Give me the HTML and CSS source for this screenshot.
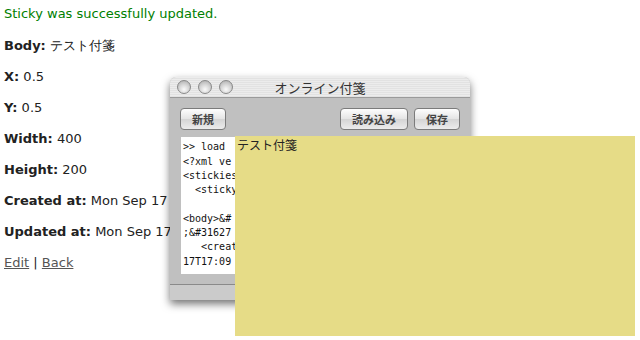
FILE: index.html
```html
<!DOCTYPE html>
<html lang="ja">
<head>
  <meta charset="UTF-8">
  <title>Sticky</title>
  <link rel="stylesheet" href="styles.css">
</head>
<body>
  <p class="notice">Sticky was successfully updated.</p>

  <p><b>Body:</b> テスト付箋</p>
  <p><b>X:</b> 0.5</p>
  <p><b>Y:</b> 0.5</p>
  <p><b>Width:</b> 400</p>
  <p><b>Height:</b> 200</p>
  <p><b>Created at:</b> Mon Sep 17</p>
  <p><b>Updated at:</b> Mon Sep 17</p>

  <p><a href="#">Edit</a> | <a href="#">Back</a></p>

  <div class="window">
    <div class="titlebar">
      <div class="lights"><span></span><span></span><span></span></div>
      <div class="title">オンライン付箋</div>
    </div>
    <div class="panel">
      <div class="toolbar">
        <button>新規</button>
        <div class="right">
          <button>読み込み</button>
          <button>保存</button>
        </div>
      </div>
      <pre class="log">&gt;&gt; load
&lt;?xml ve
&lt;stickies:
  &lt;sticky&gt;

&lt;body&gt;&amp;#
;&amp;#31627
   &lt;creat
17T17:09</pre>
    </div>
    <div class="statusbar"></div>
  </div>

  <div class="sticky">テスト付箋</div>
</body>
</html>
```

FILE: styles.css
```css
body {
  margin: 0;
  padding: 5px 4px;
  font-family: "DejaVu Sans", Verdana, sans-serif;
  font-size: 13px;
  color: #222;
  background: #fff;
  overflow: hidden;
}

p {
  margin: 0 0 13px 0;
  line-height: 18px;
}

.notice {
  color: #008000;
  margin-bottom: 14px;
}

b {
  font-weight: bold;
}

a {
  color: #555;
}

.window {
  position: absolute;
  left: 170px;
  top: 77px;
  width: 300px;
  height: 223px;
  border-radius: 6px 6px 0 0;
  background: #c0c0c0;
  box-shadow: 0 4px 9px rgba(0, 0, 0, 0.55);
  display: flex;
  flex-direction: column;
  overflow: hidden;
}

.titlebar {
  height: 22px;
  background: repeating-linear-gradient(#ececec 0, #ececec 1px, #e2e2e2 1px, #e2e2e2 2px);
  border-bottom: 1px solid #9a9a9a;
  display: flex;
  align-items: center;
  position: relative;
}

.lights {
  display: flex;
  gap: 7px;
  padding-left: 7px;
}

.lights span {
  width: 14px;
  height: 14px;
  border-radius: 50%;
  border: 1px solid #888;
  background: radial-gradient(circle at 50% 70%, #fafafa 0, #d8d8d8 45%, #a8a8a8 100%);
  box-sizing: border-box;
}

.title {
  position: absolute;
  left: 0;
  right: 0;
  text-align: center;
  font-family: "Noto Sans CJK JP", sans-serif;
  font-size: 13px;
  color: #333;
}

.panel {
  flex: 1;
  padding: 10px 10px 10px 10px;
  display: flex;
  flex-direction: column;
  gap: 7px;
  border-bottom: 1px solid #8a8a8a;
}

.toolbar {
  display: flex;
  justify-content: space-between;
}

.right {
  display: flex;
  gap: 6px;
}

button {
  height: 22px;
  padding: 0 11px;
  border: 1px solid #7b7b7b;
  border-radius: 4px;
  background: linear-gradient(#fdfdfd, #e4e4e4 50%, #d4d4d4 51%, #ececec);
  font-family: "Noto Sans CJK JP", sans-serif;
  font-size: 11px;
  font-weight: bold;
  color: #444;
}

.log {
  margin: 0 0 0 1px;
  background: #fff;
  height: 131px;
  padding: 3px 2px;
  font-family: "DejaVu Sans Mono", monospace;
  font-size: 10px;
  line-height: 14.3px;
  color: #111;
  overflow: hidden;
}

.statusbar {
  height: 16px;
  background: #cbcbcb;
}

.sticky {
  position: absolute;
  left: 235px;
  top: 136px;
  width: 400px;
  height: 200px;
  background: #e6dc87;
  font-family: "Noto Sans CJK JP", sans-serif;
  font-size: 12px;
  line-height: 17px;
  padding: 0 2px;
  box-sizing: border-box;
  color: #222;
}
```
